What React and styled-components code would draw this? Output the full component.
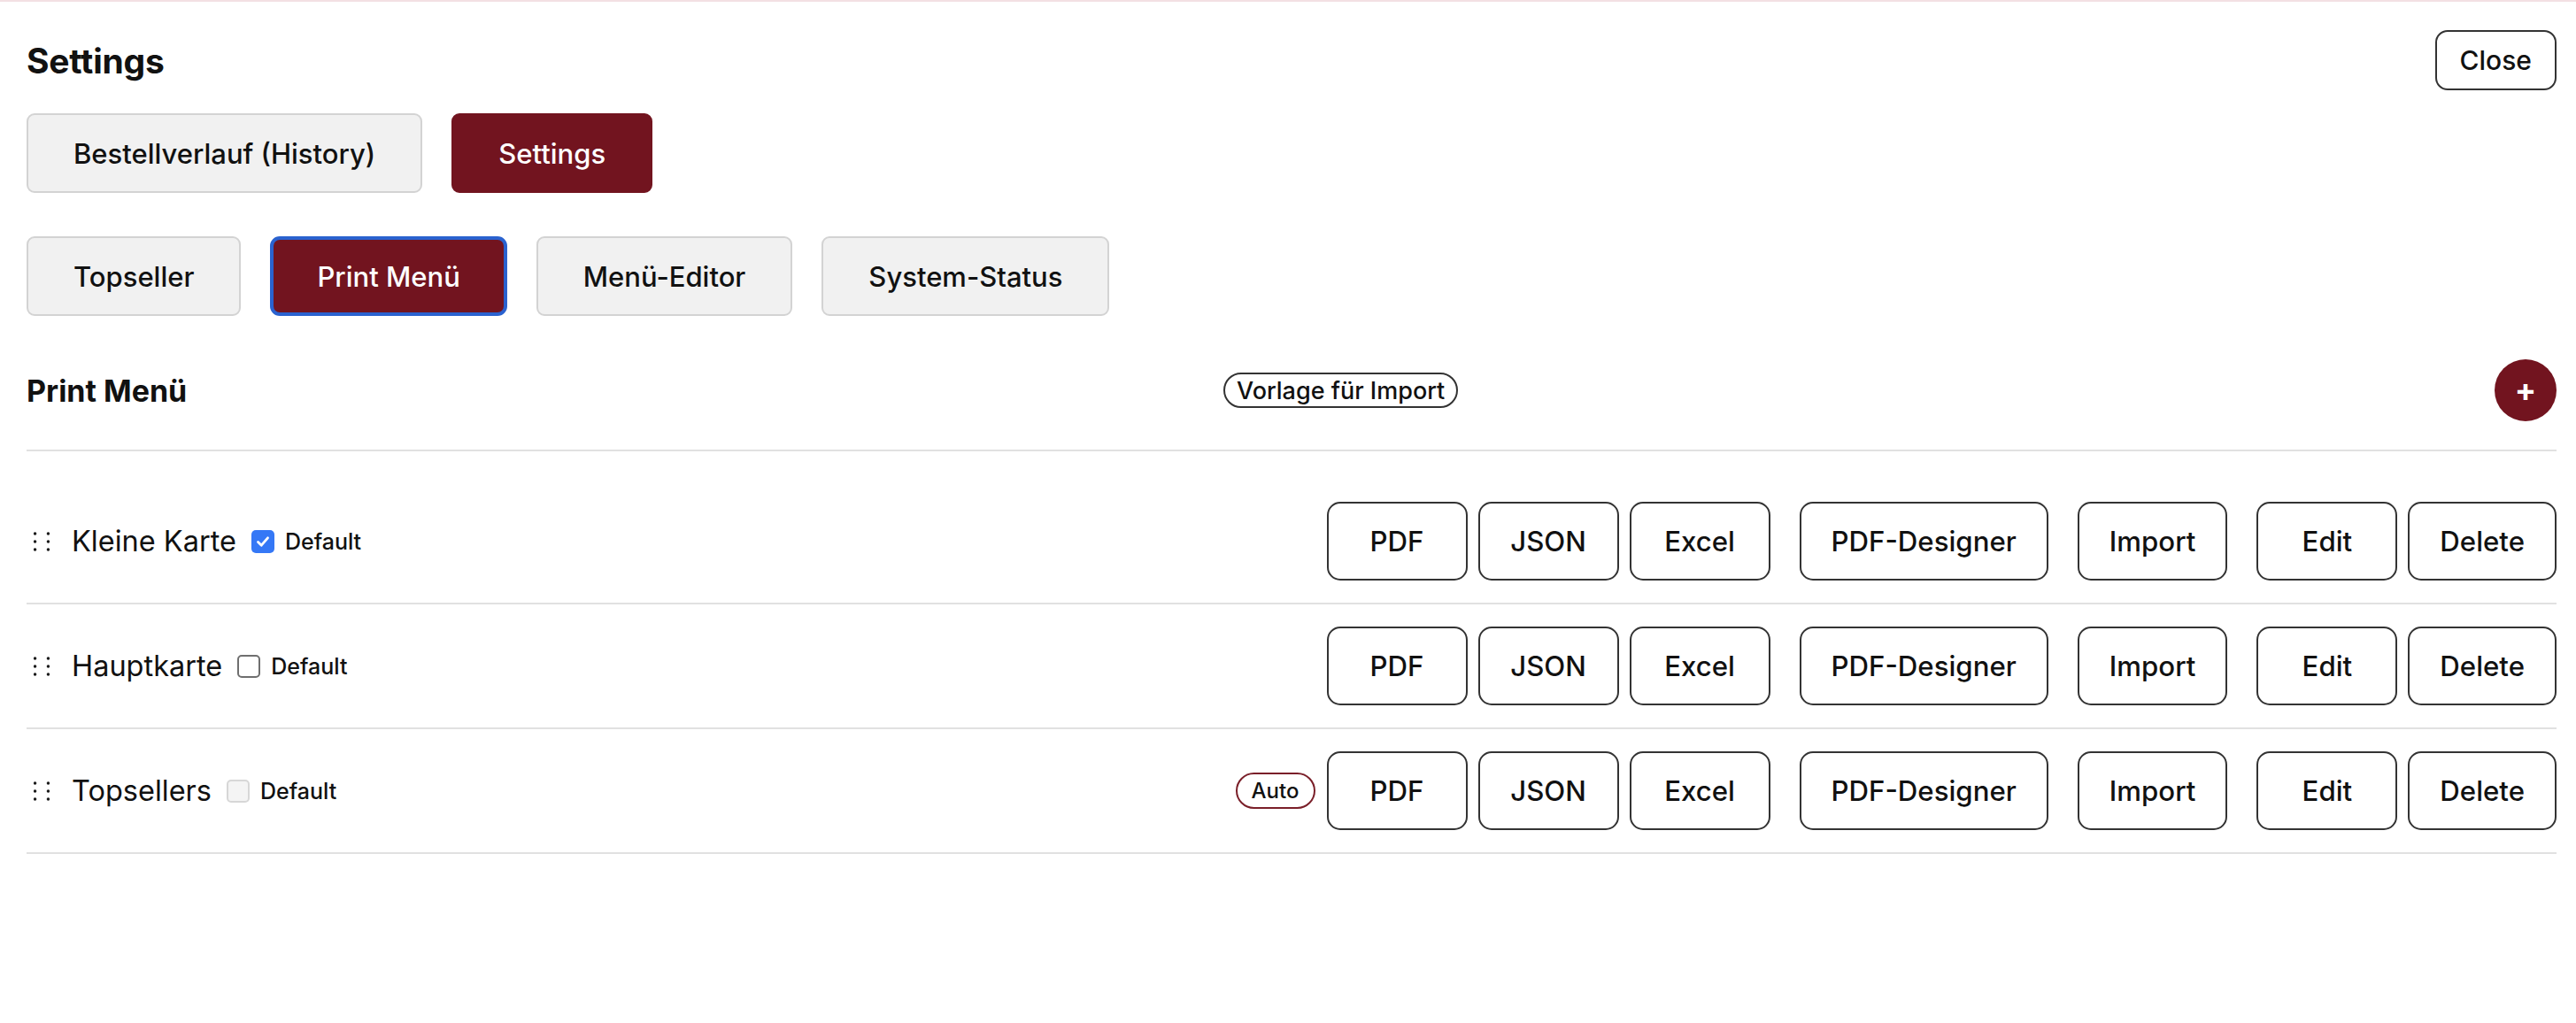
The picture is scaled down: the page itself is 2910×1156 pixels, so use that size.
import React from 'react'
import styled, { createGlobalStyle, css } from 'styled-components'

const GlobalStyle = createGlobalStyle`
  html, body {
    margin: 0;
    padding: 0;
    background: #ffffff;
  }

  body {
    font-family: Inter, "Noto Sans", "Liberation Sans", sans-serif;
    color: #111111;
  }

  * {
    box-sizing: border-box;
  }
`

const menus = [
  { id: 'klein', name: 'Kleine Karte', state: 'checked' },
  { id: 'haupt', name: 'Hauptkarte', state: 'empty' },
  { id: 'top', name: 'Topsellers', state: 'disabled', auto: true },
]

//drag handle drawn as two columns of dots
const GripIcon = () => (
  <svg width="18" height="22" viewBox="0 0 18 22">
    {[1.6, 16.4].map(cx =>
      [2, 11, 20].map(cy => <circle key={`${cx}-${cy}`} cx={cx} cy={cy} r="1.7" fill="#1b1b1b" />)
    )}
  </svg>
)

const CheckMark = () => (
  <svg width="18" height="18" viewBox="0 0 18 18">
    <path d="M3.5 9.5 L7.3 13.2 L14.5 4.8" fill="none" stroke="#fff" strokeWidth="2.8" strokeLinecap="round" strokeLinejoin="round" />
  </svg>
)

const App = () => {
  return (
    <>
      <GlobalStyle />
      <Page>
        <TopBar>
          <Title>Settings</Title>
          <CloseButton>Close</CloseButton>
        </TopBar>

        <TabRow>
          <Tab>Bestellverlauf (History)</Tab>
          <Tab $active>Settings</Tab>
        </TabRow>

        <TabRow $spaced>
          <Tab>Topseller</Tab>
          <Tab $active $focused>Print Menü</Tab>
          <Tab>Menü-Editor</Tab>
          <Tab>System-Status</Tab>
        </TabRow>

        <SectionHeader>
          <SectionTitle>Print Menü</SectionTitle>
          <TemplateBadge>Vorlage für Import</TemplateBadge>
          <AddButton>+</AddButton>
        </SectionHeader>

        <MenuList>
          {menus.map(menu => (
            <MenuRow key={menu.id}>
              <div className='left'>
                <Handle><GripIcon /></Handle>
                <MenuName>{menu.name}</MenuName>
                <Check $state={menu.state}>
                  {menu.state === 'checked' && <CheckMark />}
                </Check>
                <DefaultLabel>Default</DefaultLabel>
              </div>

              <Actions>
                <ActionGroup>
                  {menu.auto && <AutoBadge>Auto</AutoBadge>}
                  <ActionButton>PDF</ActionButton>
                  <ActionButton>JSON</ActionButton>
                  <ActionButton>Excel</ActionButton>
                </ActionGroup>
                <ActionGroup>
                  <ActionButton>PDF-Designer</ActionButton>
                </ActionGroup>
                <ActionGroup>
                  <ActionButton>Import</ActionButton>
                </ActionGroup>
                <ActionGroup>
                  <ActionButton>Edit</ActionButton>
                  <ActionButton>Delete</ActionButton>
                </ActionGroup>
              </Actions>
            </MenuRow>
          ))}
        </MenuList>
      </Page>
    </>
  )
}

const Page = styled.div`
  min-height: 1156px;
  border-top: 2px solid #f3e0e3;
  padding: 32px 22px 40px 30px;
`

const TopBar = styled.header`
  display: flex;
  justify-content: space-between;
  align-items: center;
  height: 68px;
`

const Title = styled.h1`
  margin: 0;
  font-size: 39px;
  font-weight: 700;
  letter-spacing: -0.2px;
  color: #111;
`

const CloseButton = styled.button`
  height: 68px;
  padding: 0 26px;
  font-family: inherit;
  font-size: 30px;
  font-weight: 500;
  color: #111;
  background: #fff;
  border: 2px solid #333;
  border-radius: 14px;
`

const TabRow = styled.nav`
  display: flex;
  gap: 33px;
  margin-top: ${p => (p.$spaced ? '49px' : '26px')};
`

const Tab = styled.button`
  height: 90px;
  padding: 0 51px;
  font-family: inherit;
  font-size: 31px;
  font-weight: 500;
  color: #111;
  background: #f1f1f1;
  border: 2px solid #d3d3d3;
  border-radius: 9px;

  ${p => p.$active && css`
    color: #fff;
    background: #72141f;
    border-color: #72141f;
  `}

  ${p => p.$focused && css`
    border: 4px solid #2a62cf;
    border-radius: 11px;
    padding: 0 49px;
  `}
`

const SectionHeader = styled.div`
  display: flex;
  justify-content: space-between;
  align-items: center;
  margin-top: 49px;
  padding-bottom: 32px;
  border-bottom: 2px solid #e1e1e1;
`

const SectionTitle = styled.h2`
  margin: 0;
  font-size: 34px;
  font-weight: 700;
  color: #111;
`

const TemplateBadge = styled.span`
  display: inline-flex;
  align-items: center;
  height: 40px;
  padding: 0 13px;
  font-size: 27px;
  font-weight: 500;
  border: 2px solid #333;
  border-radius: 20px;
`

const AddButton = styled.button`
  width: 70px;
  height: 70px;
  display: flex;
  align-items: center;
  justify-content: center;
  padding: 0 0 3px;
  font-family: inherit;
  font-size: 36px;
  font-weight: 700;
  color: #fff;
  background: #72141f;
  border: none;
  border-radius: 50%;
`

const MenuList = styled.div`
  margin-top: 32px;
`

const MenuRow = styled.div`
  display: flex;
  justify-content: space-between;
  align-items: center;
  padding: 25px 0;
  border-bottom: 2px solid #e1e1e1;

  .left {
    display: flex;
    align-items: center;
  }
`

const Handle = styled.span`
  display: flex;
  margin: 0 25px 0 8px;
`

const MenuName = styled.span`
  font-size: 32.5px;
  font-weight: 400;
  color: #111;
  margin-right: 17px;
`

const Check = styled.span`
  width: 26px;
  height: 26px;
  display: flex;
  align-items: center;
  justify-content: center;
  border-radius: 5px;
  margin-right: 12px;

  ${p => p.$state === 'checked' && css`
    background: #3578f6;
  `}
  ${p => p.$state === 'empty' && css`
    background: #fff;
    border: 2px solid #6f6f6f;
  `}
  ${p => p.$state === 'disabled' && css`
    background: #f4f4f4;
    border: 2px solid #d7d7d7;
  `}
`

const DefaultLabel = styled.span`
  font-size: 25px;
  font-weight: 500;
  color: #111;
`

const Actions = styled.div`
  display: flex;
  align-items: center;
  gap: 33px;
`

const ActionGroup = styled.div`
  display: flex;
  align-items: center;
  gap: 12px;
`

const ActionButton = styled.button`
  height: 89px;
  min-width: 159px;
  padding: 0 34px;
  font-family: inherit;
  font-size: 31.2px;
  font-weight: 500;
  color: #111;
  background: #fff;
  border: 2px solid #333;
  border-radius: 15px;
`

const AutoBadge = styled.span`
  display: inline-flex;
  align-items: center;
  justify-content: center;
  width: 90px;
  height: 41px;
  font-size: 24px;
  font-weight: 500;
  color: #111;
  border: 2px solid #7a1f29;
  border-radius: 21px;
  margin-right: 1px;
`

export default App
